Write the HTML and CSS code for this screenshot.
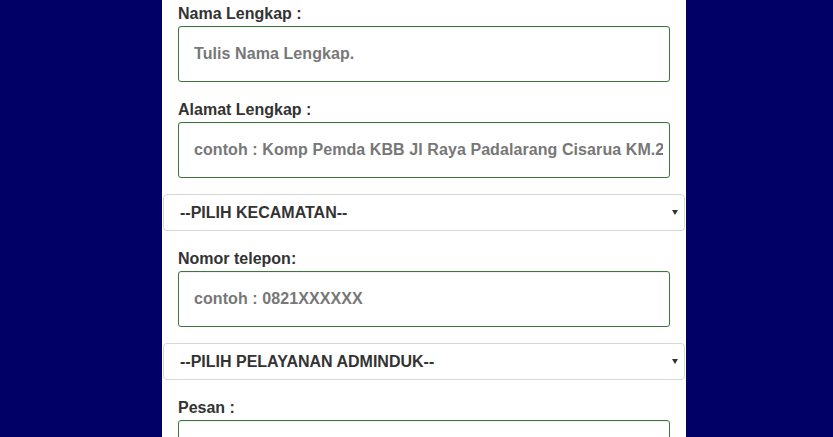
FILE: index.html
```html
<!DOCTYPE html>
<html lang="id">
<head>
<meta charset="utf-8">
<title>Form</title>
<link rel="stylesheet" href="styles.css">
</head>
<body>
<div class="panel">
  <form class="form">
    <div class="group">
      <label class="label">Nama Lengkap :</label>
      <input class="field" type="text" placeholder="Tulis Nama Lengkap.">
    </div>
    <div class="group">
      <label class="label">Alamat Lengkap :</label>
      <input class="field" type="text" placeholder="contoh : Komp Pemda KBB Jl Raya Padalarang Cisarua KM.2">
    </div>
    <div class="group">
      <div class="select">
        <span class="select-text">--PILIH KECAMATAN--</span>
        <span class="caret"></span>
      </div>
    </div>
    <div class="group">
      <label class="label">Nomor telepon:</label>
      <input class="field" type="text" placeholder="contoh : 0821XXXXXX">
    </div>
    <div class="group">
      <div class="select">
        <span class="select-text">--PILIH PELAYANAN ADMINDUK--</span>
        <span class="caret"></span>
      </div>
    </div>
    <div class="group">
      <label class="label">Pesan :</label>
      <textarea class="field area"></textarea>
    </div>
  </form>
</div>
</body>
</html>
```

FILE: styles.css
```css
html, body {
  margin: 0;
  padding: 0;
  height: 100%;
  overflow: hidden;
}
body {
  background: #000066;
  font-family: "Liberation Sans", Arial, sans-serif;
}
.panel {
  margin-left: 162px;
  width: 524px;
  min-height: 100%;
  background: #fff;
  box-sizing: border-box;
  padding: 2px 16px 0;
}
.form {
  display: flex;
  flex-direction: column;
}
.group {
  display: flex;
  flex-direction: column;
  margin-bottom: 16px;
}
.label {
  display: block;
  font-size: 16px;
  font-weight: bold;
  color: #333;
  line-height: 20px;
  padding-top: 2px;
  margin-bottom: 2px;
}
.field {
  box-sizing: border-box;
  width: 100%;
  height: 56px;
  border: 1px solid #3c763d;
  border-radius: 3px;
  padding: 0 6px 0 15px;
  font-family: "Liberation Sans", Arial, sans-serif;
  font-size: 16px;
  font-weight: bold;
  letter-spacing: 0.08px;
  color: #555;
  background: #fff;
  box-shadow: inset 0 1px 1px rgba(0,0,0,0.06);
  outline: none;
}
.field::placeholder {
  color: #777;
  opacity: 1;
}
.area {
  height: 100px;
  resize: none;
}
.select {
  margin: 0 -15px;
  height: 37px;
  box-sizing: border-box;
  border: 1px solid #d6d6d6;
  border-radius: 4px;
  display: flex;
  align-items: center;
  justify-content: space-between;
  padding: 0 6px 0 16px;
  background: #fff;
}
.select-text {
  font-size: 16px;
  font-weight: bold;
  color: #333;
}
.caret {
  width: 0;
  height: 0;
  border-left: 3px solid transparent;
  border-right: 3px solid transparent;
  border-top: 5px solid #333;
}
```
